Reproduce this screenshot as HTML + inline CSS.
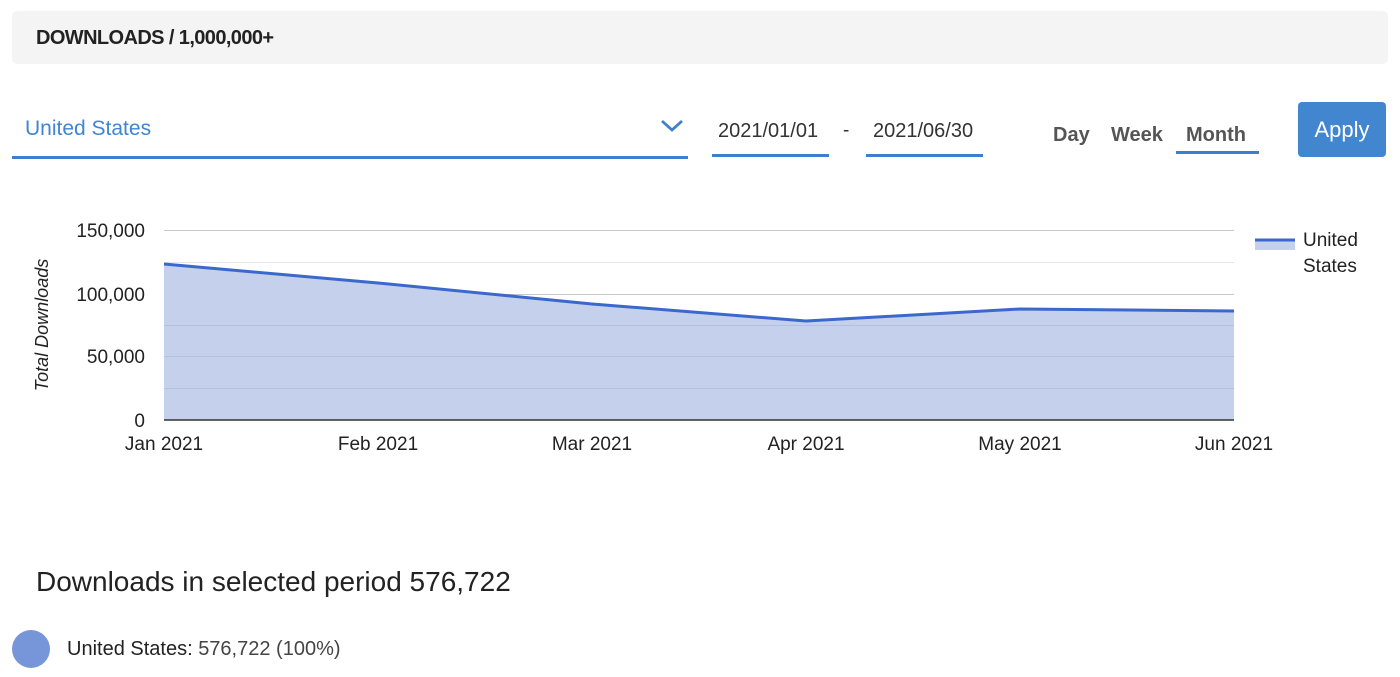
<!DOCTYPE html>
<html><head><style>
body{margin:0;width:1400px;height:677px;background:#fff;font-family:"Liberation Sans",Arial,sans-serif;position:relative;overflow:hidden}
.a{position:absolute}
</style></head><body>
<div class="a" style="left:12px;top:11px;width:1376px;height:53px;background:#f4f4f4;border-radius:5px"></div>
<div class="a" style="left:36px;top:27px;font-size:20px;font-weight:bold;color:#222;letter-spacing:-0.6px">DOWNLOADS / 1,000,000+</div>
<div class="a" style="left:25px;top:117px;font-size:21px;color:#3f85d4">United States</div>
<svg class="a" style="left:659px;top:116px" width="26" height="18"><path d="M3 5 L13 14 L23 5" fill="none" stroke="#3f7fcc" stroke-width="2.8"/></svg>
<div class="a" style="left:12px;top:156px;width:676px;height:3px;background:#3b7fcf"></div>
<div class="a" style="left:718px;top:120px;font-size:20px;color:#333">2021/01/01</div>
<div class="a" style="left:712px;top:154px;width:117px;height:3px;background:#3b7fcf"></div>
<div class="a" style="left:843px;top:120px;font-size:19px;color:#333">-</div>
<div class="a" style="left:873px;top:120px;font-size:20px;color:#333">2021/06/30</div>
<div class="a" style="left:866px;top:154px;width:117px;height:3px;background:#3b7fcf"></div>
<div class="a" style="left:1053px;top:124px;font-size:20px;font-weight:bold;color:#555">Day</div>
<div class="a" style="left:1111px;top:124px;font-size:20px;font-weight:bold;color:#555">Week</div>
<div class="a" style="left:1186px;top:124px;font-size:20px;font-weight:bold;color:#555">Month</div>
<div class="a" style="left:1176px;top:151px;width:83px;height:3px;background:#3b7fcf"></div>
<div class="a" style="left:1298px;top:102px;width:88px;height:55px;background:#4286d0;border-radius:4px;color:#fff;font-size:22px;text-align:center;line-height:55px">Apply</div>
<svg class="a" style="left:0;top:200px" width="1400" height="270">
<g stroke="#e6e6e6" stroke-width="1"><line x1="164" x2="1234" y1="62.5" y2="62.5"/><line x1="164" x2="1234" y1="125.5" y2="125.5"/><line x1="164" x2="1234" y1="188.5" y2="188.5"/></g>
<g stroke="#c8c8c8" stroke-width="1"><line x1="164" x2="1234" y1="30.5" y2="30.5"/><line x1="164" x2="1234" y1="94.5" y2="94.5"/><line x1="164" x2="1234" y1="156.5" y2="156.5"/></g>
<path d="M164 64 L378 83 L592 104 L806 121 L1020 109 L1234 111 L1234 220 L164 220Z" fill="#c4d0ec"/>
<g stroke="#b4c0de" stroke-width="1"><line x1="164" x2="1234" y1="125.5" y2="125.5"/><line x1="164" x2="1234" y1="188.5" y2="188.5"/><line x1="164" x2="1234" y1="156.5" y2="156.5"/></g>
<path d="M164 64 L378 83 L592 104 L806 121 L1020 109 L1234 111" fill="none" stroke="#3b68cc" stroke-width="3"/>
<line x1="164" x2="1234" y1="220" y2="220" stroke="#333" stroke-width="1.5"/>
<g font-size="19" fill="#222" text-anchor="end"><text x="145" y="37">150,000</text><text x="145" y="101">100,000</text><text x="145" y="163">50,000</text><text x="145" y="227">0</text></g>
<g font-size="19" fill="#222" text-anchor="middle"><text x="164" y="250">Jan 2021</text><text x="378" y="250">Feb 2021</text><text x="592" y="250">Mar 2021</text><text x="806" y="250">Apr 2021</text><text x="1020" y="250">May 2021</text><text x="1234" y="250">Jun 2021</text></g>
<text x="0" y="0" transform="translate(48 125) rotate(-90)" font-size="18" font-style="italic" fill="#222" text-anchor="middle">Total Downloads</text>
<rect x="1255" y="40" width="40" height="10" fill="#c4d0ec"/><line x1="1255" x2="1295" y1="40" y2="40" stroke="#3b68cc" stroke-width="3"/>
<text x="1303" y="46" font-size="19" fill="#222">United</text><text x="1303" y="72" font-size="19" fill="#222">States</text>
</svg>
<div class="a" style="left:36px;top:566px;font-size:28px;color:#222">Downloads in selected period 576,722</div>
<div class="a" style="left:12px;top:630px;width:38px;height:38px;border-radius:50%;background:#7796da"></div>
<div class="a" style="left:67px;top:638px;font-size:20px;color:#222">United States: <span style="color:#444">576,722 (100%)</span></div>
</body></html>
